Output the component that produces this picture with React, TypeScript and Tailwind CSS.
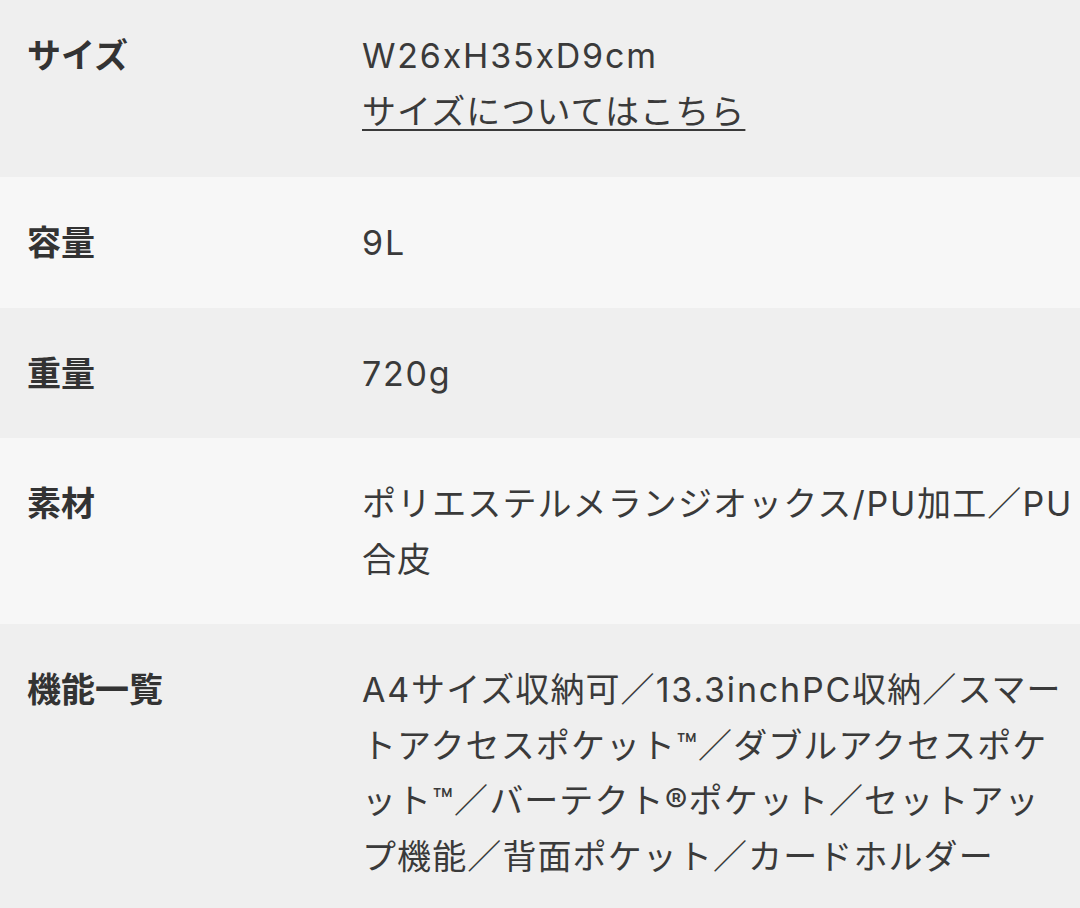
function Row({
  label,
  children,
  shade,
  first,
}: {
  label: string;
  children: React.ReactNode;
  shade: boolean;
  first?: boolean;
}) {
  return (
    <div
      className={`flex ${shade ? "bg-[#efefef]" : "bg-[#f7f7f7]"} ${
        first ? "pt-[28px] pb-[38px]" : "pt-[38px] pb-[37px]"
      }`}
    >
      <div className="w-[362px] shrink-0 pl-[27px] font-bold text-[#333]">{label}</div>
      <div className="flex-1 whitespace-nowrap tracking-[1.1px] text-[#3a3a3a]">{children}</div>
    </div>
  );
}

// latin runs are set a little wider, like the original's font
function L({ children }: { children: React.ReactNode }) {
  return <span className="tracking-[1.8px]">{children}</span>;
}

export default function App() {
  return (
    <main
      className="w-[1080px] h-[908px] overflow-hidden bg-[#efefef] text-[34px] leading-[55.5px]"
      style={{ fontFamily: 'Inter, "Noto Sans CJK JP", sans-serif' }}
    >
      <Row label="サイズ" shade first>
        <div>
          <L>W26xH35xD9cm</L>
        </div>
        <a href="#" className="underline decoration-2 underline-offset-[5px]">
          サイズについてはこちら
        </a>
      </Row>
      <Row label="容量" shade={false}>
        <L>9L</L>
      </Row>
      <Row label="重量" shade>
        <L>720g</L>
      </Row>
      <Row label="素材" shade={false}>
        ポリエステルメランジオックス<L>/PU</L>加工／<L>PU</L>
        <br />
        合皮
      </Row>
      <Row label="機能一覧" shade>
        <L>A4</L>サイズ収納可／<L>13.3inchPC</L>収納／スマー
        <br />
        トアクセスポケット™／ダブルアクセスポケ
        <br />
        ット™／バーテクト®ポケット／セットアッ
        <br />
        プ機能／背面ポケット／カードホルダー
      </Row>
    </main>
  );
}
